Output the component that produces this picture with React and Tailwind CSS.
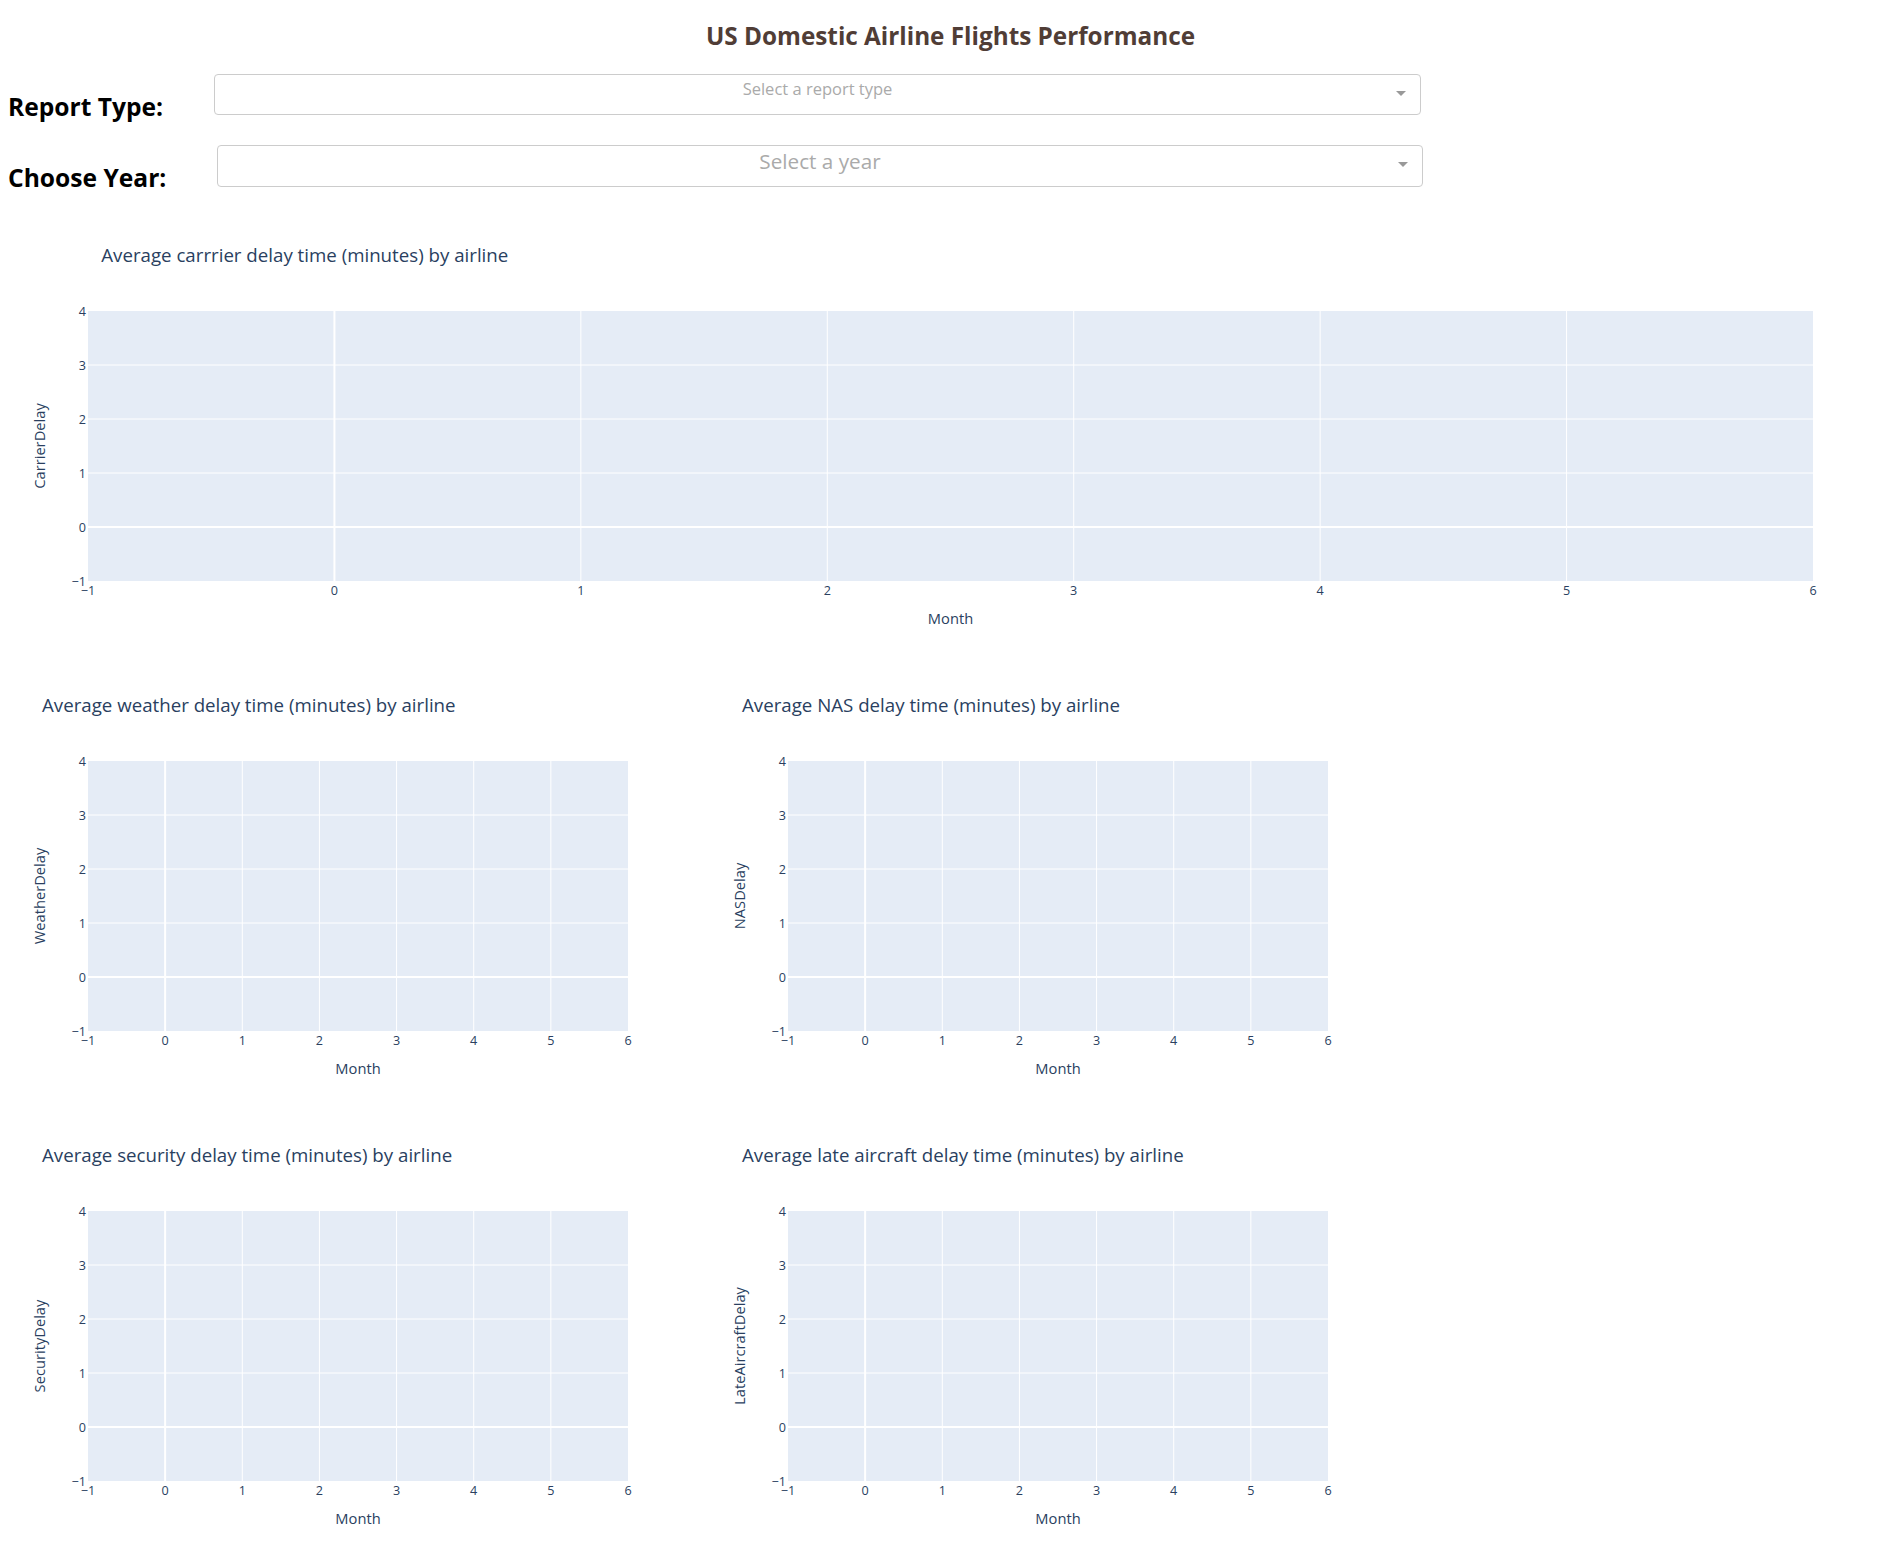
const FONT = { fontFamily: '"Open Sans", "Noto Sans", Arial, sans-serif' };

function Dropdown({ placeholder, big, widthClass }) {
  return (
    <div
      className={`${widthClass} ${big ? "h-[42px]" : "h-[41px]"} border border-[#ccc] rounded-[4px] bg-white grid grid-cols-[40px_1fr_40px]`}
    >
      <div />
      <div
        className={`text-center text-[#aaa] whitespace-nowrap ${big ? "text-[20.7px] leading-[26px] pt-[2px]" : "text-[16.5px] leading-[22px] pt-[3px]"}`}
      >
        {placeholder}
      </div>
      <div className="flex items-start justify-end pr-[14px] pt-[16px]">
        <div className="w-0 h-0 border-t-[5px] border-t-[#999] border-x-[5px] border-x-transparent" />
      </div>
    </div>
  );
}

function Chart({ width, title, yTitle }) {
  const plotW = width - 160;
  const x0 = 80;
  const xs = [-1, 0, 1, 2, 3, 4, 5, 6];
  const ys = [-1, 0, 1, 2, 3, 4];
  const px = (v) => x0 + ((v + 1) / 7) * plotW;
  const py = (v) => 270 - ((v + 1) / 5) * 270;
  const fmt = (v) => (v < 0 ? "\u2212" + Math.abs(v) : String(v));

  return (
    <div className="h-[450px] shrink-0" style={{ width }}>
      <div className="h-[100px] pt-[32px]" style={{ paddingLeft: width * 0.05 - 1 }}>
        <div className="text-[18.7px] leading-[24px] text-[#2a3f5f] whitespace-nowrap">
          {title}
        </div>
      </div>
      {/* plot area, grid and axes */}
      <svg width={width} height={350} className="block overflow-visible" style={FONT}>
        <rect x={x0} y={0} width={plotW} height={270} fill="#E5ECF6" />
        {xs
          .filter((v) => v > -1 && v < 6)
          .map((v) => (
            <line
              key={"gx" + v}
              x1={px(v)}
              x2={px(v)}
              y1={0}
              y2={270}
              stroke="#fff"
              strokeWidth={v === 0 ? 2 : 1}
            />
          ))}
        {ys
          .filter((v) => v > -1 && v < 4)
          .map((v) => (
            <line
              key={"gy" + v}
              x1={x0}
              x2={x0 + plotW}
              y1={py(v)}
              y2={py(v)}
              stroke="#fff"
              strokeWidth={v === 0 ? 2 : 1}
            />
          ))}
        {ys.map((v) => (
          <text
            key={"ty" + v}
            x={x0 - 2}
            y={py(v) + 4.5}
            textAnchor="end"
            fontSize="12.6"
            fill="#2a3f5f"
          >
            {fmt(v)}
          </text>
        ))}
        {xs.map((v) => (
          <text
            key={"tx" + v}
            x={px(v)}
            y={284}
            textAnchor="middle"
            fontSize="12.6"
            fill="#2a3f5f"
          >
            {fmt(v)}
          </text>
        ))}
        <text
          x={x0 + plotW / 2}
          y={313}
          textAnchor="middle"
          fontSize="14.7"
          fill="#2a3f5f"
        >
          Month
        </text>
        <text
          transform="translate(37 135) rotate(-90)"
          textAnchor="middle"
          fontSize="14.7"
          fill="#2a3f5f"
        >
          {yTitle}
        </text>
      </svg>
    </div>
  );
}

export default function App() {
  return (
    <div className="w-full h-[1552px] overflow-hidden bg-white px-[8px]" style={FONT}>
      <h1 className="pt-[18px] text-center text-[24.3px] leading-[36px] font-bold text-[#503D36]">
        US Domestic Airline Flights Performance
      </h1>

      <div className="mt-[20px] flex items-start">
        <div className="w-[206px] shrink-0 mt-[15px] text-[24.6px] leading-[36px] font-bold text-black">
          Report Type:
        </div>
        <Dropdown placeholder="Select a report type" widthClass="w-[1207px]" />
      </div>

      <div className="mt-[20px] flex items-start">
        <div className="w-[209px] shrink-0 mt-[15px] text-[24.6px] leading-[36px] font-bold text-black">
          Choose Year:
        </div>
        <Dropdown placeholder="Select a year" big widthClass="w-[1206px]" />
      </div>

      <div className="mt-[15px]">
        <Chart width={1885} title="Average carrrier delay time (minutes) by airline" yTitle="CarrierDelay" />
      </div>

      <div className="flex">
        <Chart width={700} title="Average weather delay time (minutes) by airline" yTitle="WeatherDelay" />
        <Chart width={700} title="Average NAS delay time (minutes) by airline" yTitle="NASDelay" />
      </div>

      <div className="flex">
        <Chart width={700} title="Average security delay time (minutes) by airline" yTitle="SecurityDelay" />
        <Chart width={700} title="Average late aircraft delay time (minutes) by airline" yTitle="LateAircraftDelay" />
      </div>
    </div>
  );
}
